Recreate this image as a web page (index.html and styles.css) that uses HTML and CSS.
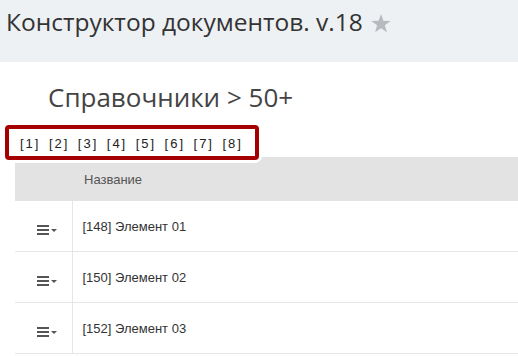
FILE: index.html
```html
<!DOCTYPE html>
<html lang="ru">
<head>
  <meta charset="UTF-8">
  <title>Конструктор документов</title>
  <link rel="stylesheet" href="styles.css">
</head>
<body>

<!-- Top bar -->
<header class="topbar">
  <span class="app-title">Конструктор документов. v.18</span>
  <svg class="fav-star" width="20" height="19" viewBox="0 0 20 19">
    <polygon points="10,0 12.4,6.8 19.6,6.9 13.9,11.3 15.9,18.3 10,14.2 4.1,18.3 6.1,11.3 0.4,6.9 7.6,6.8" fill="#b7bbc0"/>
  </svg>
</header>

<main class="content">
  <h2 class="page-title">Справочники &gt; 50+</h2>

  <div class="pager">
    <a href="#">[1]</a>
    <a href="#">[2]</a>
    <a href="#">[3]</a>
    <a href="#">[4]</a>
    <a href="#">[5]</a>
    <a href="#">[6]</a>
    <a href="#">[7]</a>
    <a href="#">[8]</a>
  </div>

  <table class="list-table">
    <thead>
      <tr>
        <th class="col-menu"></th>
        <th>Название</th>
      </tr>
    </thead>
    <tbody>
      <tr>
        <td class="col-menu"><span class="row-menu"><span class="bars"></span><span class="caret"></span></span></td>
        <td>[148] Элемент 01</td>
      </tr>
      <tr>
        <td class="col-menu"><span class="row-menu"><span class="bars"></span><span class="caret"></span></span></td>
        <td>[150] Элемент 02</td>
      </tr>
      <tr>
        <td class="col-menu"><span class="row-menu"><span class="bars"></span><span class="caret"></span></span></td>
        <td>[152] Элемент 03</td>
      </tr>
    </tbody>
  </table>
</main>

</body>
</html>
```

FILE: styles.css
```css
/* Basic styling */
body {
  margin: 0;
  padding: 0;
  background-color: #fff;
  font-family: 'Liberation Sans', Arial, sans-serif;
  overflow: hidden;
}
.topbar {
  height: 62px;
  box-sizing: border-box;
  padding: 4px 0 0 6px;
  background-color: #eef1f4;
  display: flex;
  align-items: flex-start;
}
.app-title {
  font-family: 'Open Sans', sans-serif;
  font-size: 24.5px;
  line-height: 36px;
  color: #333;
}
.fav-star {
  margin: 10px 0 0 8px;
}

.page-title {
  margin: 18px 0 11px 48px;
  font-family: 'Open Sans', sans-serif;
  font-size: 26px;
  line-height: 34px;
  font-weight: normal;
  color: #444;
}

/* Highlighted pager */
.pager {
  position: relative;
  z-index: 2;
  display: inline-block;
  margin: 0 0 -3px 5px;
  padding: 6px 8px 4px 11px;
  border: 4px solid #a50000;
  border-radius: 4px;
  background-color: #fff;
  box-shadow: 0 0 0 3px #fff;
  line-height: 16px;
  white-space: nowrap;
}
.pager a {
  font-size: 13px;
  color: #222;
  letter-spacing: 2px;
  text-decoration: none;
  margin-right: 4px;
}

/* Table */
.list-table {
  width: calc(100% - 15px);
  margin-left: 15px;
  border-collapse: collapse;
  font-size: 13px;
  color: #333;
}
.list-table th {
  height: 44px;
  padding: 0 0 0 12px;
  background-color: #e3e3e3;
  text-align: left;
  font-weight: normal;
  color: #555;
}
.list-table td {
  height: 50px;
  padding: 0 0 0 10px;
  border-bottom: 1px solid #e6e6e6;
}
.list-table td.col-menu,
.list-table th.col-menu {
  width: 57px;
  padding: 0;
  box-sizing: border-box;
}
.list-table td.col-menu {
  border-right: 1px solid #e6e6e6;
  text-align: right;
  padding-right: 15px;
}
.row-menu {
  display: inline-flex;
  align-items: center;
  gap: 2px;
}
.bars {
  width: 12px;
  height: 2px;
  background-color: #555;
  box-shadow: 0 -4px 0 #555, 0 4px 0 #555;
}
.caret {
  width: 0;
  height: 0;
  border-left: 3px solid transparent;
  border-right: 3px solid transparent;
  border-top: 3px solid #555;
  margin-top: 1px;
}
```
